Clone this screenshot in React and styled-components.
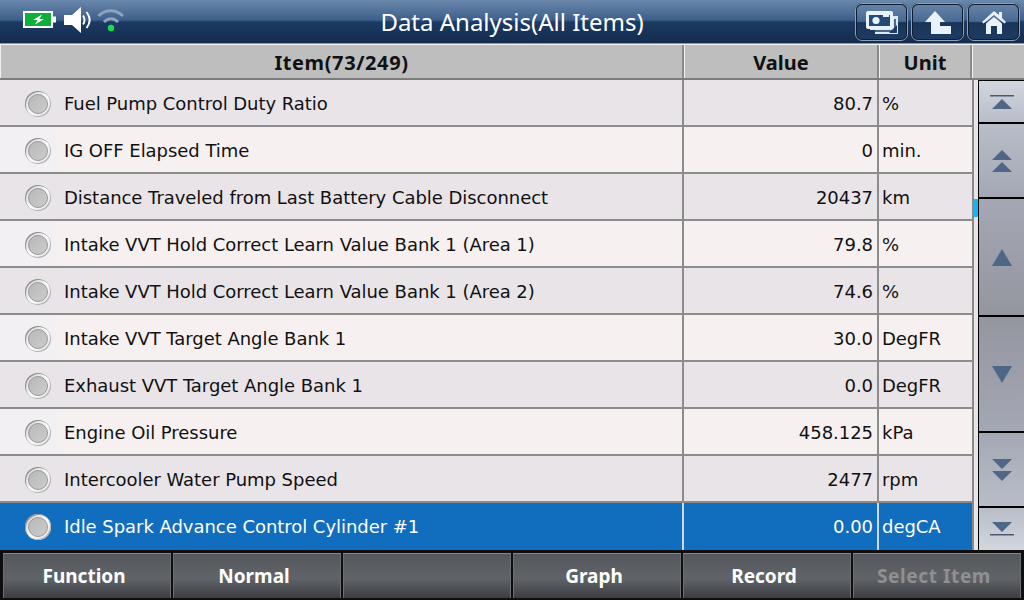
import styled, { createGlobalStyle } from 'styled-components'

const Global = createGlobalStyle`
  html, body {
    margin: 0;
    padding: 0;
    background: #000;
  }
  * {
    box-sizing: border-box;
  }
`

const Screen = styled.div`
  width: 1024px;
  height: 600px;
  display: flex;
  flex-direction: column;
  overflow: hidden;
  font-family: "Noto Sans", "DejaVu Sans", sans-serif;
  background: #e8e4e8;
`

const TopBar = styled.div`
  height: 44px;
  flex: none;
  display: grid;
  grid-template-columns: 200px 1fr 200px;
  align-items: center;
  background: linear-gradient(#6a88ac 0, #3d5f8b 20px, #1c3a62 22px, #142c4e 44px);
  border-bottom: 1px solid #8a96a6;
`

const Status = styled.div`
  display: flex;
  align-items: center;
  padding: 0 0 5px 23px;
`

const Title = styled.div`
  text-align: center;
  color: #fff;
  font-size: 24px;
  line-height: 44px;
  white-space: nowrap;
`

const TopButtons = styled.div`
  display: flex;
  justify-content: flex-end;
  gap: 3px;
  padding-right: 4px;
`

const TopButton = styled.div`
  width: 53px;
  height: 38px;
  display: flex;
  align-items: center;
  justify-content: center;
  border-radius: 7px;
  border: 2px solid #0d1c30;
  outline: 1px solid #8ea0b5;
  outline-offset: -1px;
  background: linear-gradient(#6783a6 0, #476a94 48%, #193558 52%, #1d3c63 100%);
`

const HeaderRow = styled.div`
  height: 36px;
  flex: none;
  display: grid;
  grid-template-columns: 684px 195px 93px 52px;
  background: #bebebe;
  border-top: 1px solid #f4f4f4;
  border-bottom: 2px solid #7c7c7c;
`

const HeaderCell = styled.div`
  display: flex;
  align-items: center;
  justify-content: center;
  padding-top: 2px;
  font-size: 20px;
  font-weight: bold;
  letter-spacing: ${p => p.$spacing || 0}px;
  color: #111;
  border-right: ${p => (p.$last ? 'none' : '2px solid #8a8a8a')};
  border-left: 1px solid #f0f0f0;
`

const Body = styled.div`
  height: 470px;
  flex: none;
  display: grid;
  grid-template-columns: 972px 52px;
`

const Rows = styled.div`
  display: grid;
  grid-template-rows: repeat(10, 47px);
`

const Row = styled.div`
  display: grid;
  grid-template-columns: 684px 195px 93px;
  border-bottom: ${p => (p.$selected ? 'none' : '2px solid #8c8c8c')};
  background: ${p => (p.$selected ? '#116dbe' : p.$odd ? '#f7f0f0' : '#e8e4e8')};
  color: ${p => (p.$selected ? '#fff' : '#111')};
  font-family: "DejaVu Sans", sans-serif;
  font-size: 18px;
  letter-spacing: -0.04px;
  > div {
    padding-top: ${p => (p.$selected ? 0 : 2)}px;
  }
`

const NameCell = styled.div`
  display: flex;
  align-items: center;
  padding-left: 25px;
  gap: 13px;
  white-space: nowrap;
  border-right: 2px solid ${p => (p.$selected ? '#d0d8e4' : '#8c8c8c')};
  background: ${p =>
    p.$odd && !p.$selected ? 'linear-gradient(90deg, #f2f0f2 58px, transparent 58px)' : 'none'};
`

const Led = styled.span`
  width: 26px;
  height: 26px;
  flex: none;
  display: flex;
  align-items: center;
  justify-content: center;
  border-radius: 50%;
  background: linear-gradient(135deg, #d2d2d2, #fafafa 55%, #e2e2e2);
  box-shadow: inset 1px 1px 0 #8f8f8f, inset -1px -1px 0 #b4b4b4;
  &::after {
    content: '';
    width: 18px;
    height: 18px;
    border-radius: 50%;
    border: 1px solid #989898;
    background: linear-gradient(135deg, #b8b8b8, #cccccc);
  }
`

const ValueCell = styled.div`
  display: flex;
  align-items: center;
  justify-content: flex-end;
  padding-right: 4px;
  border-right: 2px solid ${p => (p.$selected ? '#d0d8e4' : '#8c8c8c')};
`

const UnitCell = styled.div`
  display: flex;
  align-items: center;
  padding-left: 3px;
  white-space: nowrap;
`

const Scroller = styled.div`
  position: relative;
  display: flex;
  flex-direction: column;
  gap: 2px;
  padding: 1px 0 0 7px;
  background: linear-gradient(90deg, #8a8a8a 2px, #e8e4e8 2px, #e8e4e8 6px, #000 6px);
`

const Thumb = styled.div`
  position: absolute;
  left: 2px;
  top: 119px;
  width: 4px;
  height: 18px;
  background: #14b4f5;
`

const ScrollButton = styled.div`
  height: ${p => p.$h}px;
  flex: none;
  display: flex;
  align-items: center;
  justify-content: center;
  background: ${p => p.$bg};
`

const BottomBar = styled.div`
  height: 50px;
  flex: none;
  display: grid;
  grid-template-columns: repeat(6, 168px);
  gap: 2px;
  padding: 3px 3px 2px;
  background: #0e0e0e;
`

const BottomButton = styled.div`
  display: flex;
  align-items: center;
  justify-content: center;
  padding-right: 6px;
  font-size: 19px;
  font-weight: bold;
  letter-spacing: ${p => (p.$disabled ? 0.6 : 0)}px;
  color: ${p => (p.$disabled ? '#8f9092' : '#fff')};
  background: linear-gradient(#54575c 0, #606368 55%, #3c3e42 100%);
  border-top: 1px solid #85888c;
  border-left: 1px solid #6c6f73;
  border-right: 1px solid #6c6f73;
`

const items = [
  ['Fuel Pump Control Duty Ratio', '80.7', '%'],
  ['IG OFF Elapsed Time', '0', 'min.'],
  ['Distance Traveled from Last Battery Cable Disconnect', '20437', 'km'],
  ['Intake VVT Hold Correct Learn Value Bank 1 (Area 1)', '79.8', '%'],
  ['Intake VVT Hold Correct Learn Value Bank 1 (Area 2)', '74.6', '%'],
  ['Intake VVT Target Angle Bank 1', '30.0', 'DegFR'],
  ['Exhaust VVT Target Angle Bank 1', '0.0', 'DegFR'],
  ['Engine Oil Pressure', '458.125', 'kPa'],
  ['Intercooler Water Pump Speed', '2477', 'rpm'],
  ['Idle Spark Advance Control Cylinder #1', '0.00', 'degCA'],
]

const Battery = () => (
  <svg width="33" height="17" viewBox="0 0 33 17">
    <rect x="1" y="1" width="28" height="15" fill="#0fae3c" stroke="#fff" strokeWidth="2" />
    <rect x="29" y="5.5" width="4" height="6" fill="#fff" />
    <path d="M19 3.5 L10 9 L14.5 9 L12 13.5 L21 8 L16.5 8 Z" fill="#fff" />
  </svg>
)

const Speaker = () => (
  <svg width="28" height="26" viewBox="0 0 28 26" style={{ marginLeft: 8 }}>
    <path d="M0 8 H8 L17 0 V26 L8 18 H0 Z" fill="#fff" />
    <path d="M19 8.5 C21 11 21 15 19 17.5" fill="none" stroke="#fff" strokeWidth="2" />
    <path d="M22.5 5 C26.5 10 26.5 16 22.5 21" fill="none" stroke="#fff" strokeWidth="2" />
  </svg>
)

const Wifi = () => (
  <svg width="28" height="26" viewBox="0 0 28 26" style={{ marginLeft: 5 }}>
    <path d="M1.5 9 C8 2 19 2 26 9" fill="none" stroke="#8ea3bd" strokeWidth="3" />
    <path d="M7 15 C11 10.5 17 10.5 21 15" fill="none" stroke="#8ea3bd" strokeWidth="3" />
    <circle cx="14" cy="21" r="3.2" fill="#12e04a" />
  </svg>
)

const CameraIcon = () => (
  <svg width="32" height="23" viewBox="0 0 32 23">
    <path d="M4 5 H32 V23 H9 V19 H4 Z" fill="#dbe8f6" />
    <path d="M7 20 H29 V8" fill="none" stroke="#1e3c62" strokeWidth="1.5" />
    <rect x="0" y="0" width="27" height="18" rx="2" fill="#e8f2fb" />
    <rect x="3" y="4" width="21" height="11" fill="#254a78" />
    <circle cx="10" cy="9.5" r="3.6" fill="#e8f2fb" />
    <rect x="17" y="3" width="6" height="3" fill="#e8f2fb" />
    <path d="M31 14 V22 H23 Z" fill="#1e3c62" />
  </svg>
)

const UpIcon = () => (
  <svg width="26" height="23" viewBox="0 0 26 23">
    <path d="M0 11 L10 0 L20 11 H15 V15 H26 V23 H6 V11 Z" fill="#e8f2fb" />
  </svg>
)

const HomeIcon = () => (
  <svg width="24" height="23" viewBox="0 0 24 23">
    <path d="M12 0 L17 4 V1 H20 V7 L24 11 L22.5 12.5 L12 4 L1.5 12.5 L0 11 Z" fill="#e8f2fb" />
    <path d="M4 12.5 L12 6 L20 12.5 V23 H15 V15 H9 V23 H4 Z" fill="#e8f2fb" />
  </svg>
)

const Arrows = ({ dir, count, bar }) => {
  const down = dir === 'down'
  const w = 20
  const h = count === 1 && !bar ? 17 : 10
  const tris = []
  const start = bar && !down ? 4 : 0
  for (let i = 0; i < count; i++) {
    const t = start + i * (h + 2)
    tris.push(
      <path
        key={i}
        d={
          down
            ? `M2 ${t} H${2 + w} L${2 + w / 2} ${t + h} Z`
            : `M${2 + w / 2} ${t} L${2 + w} ${t + h} H2 Z`
        }
        fill="#4f6786"
      />
    )
  }
  const total = count * h + (count - 1) * 2 + (bar ? 4 : 0)
  return (
    <svg width="24" height={total} viewBox={`0 0 24 ${total}`}>
      {tris}
      {bar && <rect x="0" y={down ? total - 2 : 0} width="24" height="1.5" fill="#4a5c72" />}
    </svg>
  )
}

const App = () => (
  <Screen>
    <Global />
    <TopBar>
      <Status>
        <Battery />
        <Speaker />
        <Wifi />
      </Status>
      <Title>Data Analysis(All Items)</Title>
      <TopButtons>
        <TopButton><CameraIcon /></TopButton>
        <TopButton><UpIcon /></TopButton>
        <TopButton><HomeIcon /></TopButton>
      </TopButtons>
    </TopBar>
    <HeaderRow>
      <HeaderCell $spacing={0.6}>Item(73/249)</HeaderCell>
      <HeaderCell>Value</HeaderCell>
      <HeaderCell>Unit</HeaderCell>
      <HeaderCell $last />
    </HeaderRow>
    <Body>
      <Rows>
        {items.map(([name, value, unit], i) => (
          <Row key={name} $odd={i % 2 === 1} $selected={i === 9}>
            <NameCell $odd={i % 2 === 1} $selected={i === 9}>
              <Led />
              {name}
            </NameCell>
            <ValueCell $selected={i === 9}>{value}</ValueCell>
            <UnitCell>{unit}</UnitCell>
          </Row>
        ))}
      </Rows>
      <Scroller>
        <Thumb />
        <ScrollButton $h={41} $bg="linear-gradient(#d2d6de, #b9bdc8)"><Arrows dir="up" count={1} bar /></ScrollButton>
        <ScrollButton $h={73} $bg="linear-gradient(#b9bdc8, #a4a8b4)"><Arrows dir="up" count={2} /></ScrollButton>
        <ScrollButton $h={116} $bg="linear-gradient(#a4a8b4, #94969f)"><Arrows dir="up" count={1} /></ScrollButton>
        <ScrollButton $h={114} $bg="linear-gradient(#94969f, #a4a8b4)"><Arrows dir="down" count={1} /></ScrollButton>
        <ScrollButton $h={73} $bg="linear-gradient(#a4a8b4, #b9bdc8)"><Arrows dir="down" count={2} /></ScrollButton>
        <ScrollButton $h={42} $bg="linear-gradient(#b9bdc8, #d2d6de)"><Arrows dir="down" count={1} bar /></ScrollButton>
      </Scroller>
    </Body>
    <BottomBar>
      <BottomButton>Function</BottomButton>
      <BottomButton>Normal</BottomButton>
      <BottomButton />
      <BottomButton>Graph</BottomButton>
      <BottomButton>Record</BottomButton>
      <BottomButton $disabled>Select Item</BottomButton>
    </BottomBar>
  </Screen>
)

export default App
